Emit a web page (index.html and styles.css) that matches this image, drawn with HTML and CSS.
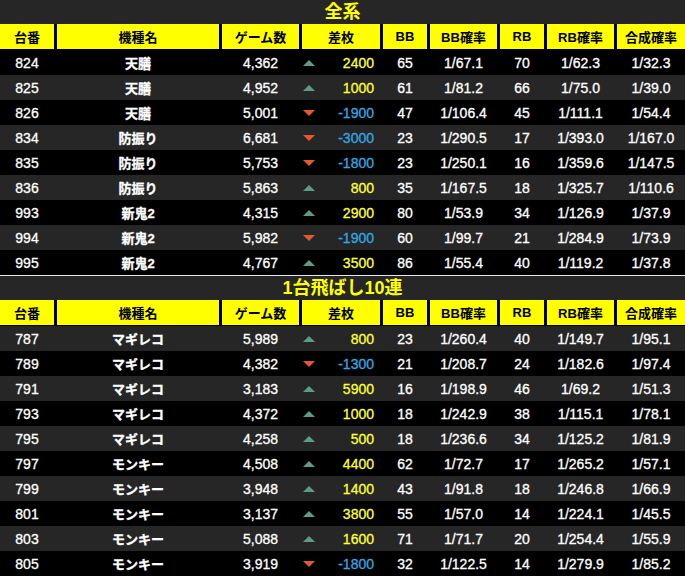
FILE: index.html
```html
<!DOCTYPE html>
<html lang="ja">
<head>
<meta charset="utf-8">
<title>データ</title>
<link rel="stylesheet" href="styles.css">
</head>
<body>
<div class="board">
  <section class="block">
    <div class="title">全系</div>
    <div class="row head"><div>台番</div><div>機種名</div><div>ゲーム数</div><div>差枚</div><div>BB</div><div>BB確率</div><div>RB</div><div>RB確率</div><div>合成確率</div></div>
    <div class="row dark"><div>824</div><div class="jp">天膳</div><div>4,362</div><div class="diff"><span class="arrow up"></span><span class="plus">2400</span></div><div>65</div><div>1/67.1</div><div>70</div><div>1/62.3</div><div>1/32.3</div></div>
    <div class="row gray"><div>825</div><div class="jp">天膳</div><div>4,952</div><div class="diff"><span class="arrow up"></span><span class="plus">1000</span></div><div>61</div><div>1/81.2</div><div>66</div><div>1/75.0</div><div>1/39.0</div></div>
    <div class="row dark"><div>826</div><div class="jp">天膳</div><div>5,001</div><div class="diff"><span class="arrow down"></span><span class="minus">-1900</span></div><div>47</div><div>1/106.4</div><div>45</div><div>1/111.1</div><div>1/54.4</div></div>
    <div class="row gray"><div>834</div><div class="jp">防振り</div><div>6,681</div><div class="diff"><span class="arrow down"></span><span class="minus">-3000</span></div><div>23</div><div>1/290.5</div><div>17</div><div>1/393.0</div><div>1/167.0</div></div>
    <div class="row dark"><div>835</div><div class="jp">防振り</div><div>5,753</div><div class="diff"><span class="arrow down"></span><span class="minus">-1800</span></div><div>23</div><div>1/250.1</div><div>16</div><div>1/359.6</div><div>1/147.5</div></div>
    <div class="row gray"><div>836</div><div class="jp">防振り</div><div>5,863</div><div class="diff"><span class="arrow up"></span><span class="plus">800</span></div><div>35</div><div>1/167.5</div><div>18</div><div>1/325.7</div><div>1/110.6</div></div>
    <div class="row dark"><div>993</div><div class="jp">新鬼2</div><div>4,315</div><div class="diff"><span class="arrow up"></span><span class="plus">2900</span></div><div>80</div><div>1/53.9</div><div>34</div><div>1/126.9</div><div>1/37.9</div></div>
    <div class="row gray"><div>994</div><div class="jp">新鬼2</div><div>5,982</div><div class="diff"><span class="arrow down"></span><span class="minus">-1900</span></div><div>60</div><div>1/99.7</div><div>21</div><div>1/284.9</div><div>1/73.9</div></div>
    <div class="row dark"><div>995</div><div class="jp">新鬼2</div><div>4,767</div><div class="diff"><span class="arrow up"></span><span class="plus">3500</span></div><div>86</div><div>1/55.4</div><div>40</div><div>1/119.2</div><div>1/37.8</div></div>
  </section>
  <section class="block second">
    <div class="title">1台飛ばし10連</div>
    <div class="row head"><div>台番</div><div>機種名</div><div>ゲーム数</div><div>差枚</div><div>BB</div><div>BB確率</div><div>RB</div><div>RB確率</div><div>合成確率</div></div>
    <div class="row gray"><div>787</div><div class="jp">マギレコ</div><div>5,989</div><div class="diff"><span class="arrow up"></span><span class="plus">800</span></div><div>23</div><div>1/260.4</div><div>40</div><div>1/149.7</div><div>1/95.1</div></div>
    <div class="row dark"><div>789</div><div class="jp">マギレコ</div><div>4,382</div><div class="diff"><span class="arrow down"></span><span class="minus">-1300</span></div><div>21</div><div>1/208.7</div><div>24</div><div>1/182.6</div><div>1/97.4</div></div>
    <div class="row gray"><div>791</div><div class="jp">マギレコ</div><div>3,183</div><div class="diff"><span class="arrow up"></span><span class="plus">5900</span></div><div>16</div><div>1/198.9</div><div>46</div><div>1/69.2</div><div>1/51.3</div></div>
    <div class="row dark"><div>793</div><div class="jp">マギレコ</div><div>4,372</div><div class="diff"><span class="arrow up"></span><span class="plus">1000</span></div><div>18</div><div>1/242.9</div><div>38</div><div>1/115.1</div><div>1/78.1</div></div>
    <div class="row gray"><div>795</div><div class="jp">マギレコ</div><div>4,258</div><div class="diff"><span class="arrow up"></span><span class="plus">500</span></div><div>18</div><div>1/236.6</div><div>34</div><div>1/125.2</div><div>1/81.9</div></div>
    <div class="row dark"><div>797</div><div class="jp">モンキー</div><div>4,508</div><div class="diff"><span class="arrow up"></span><span class="plus">4400</span></div><div>62</div><div>1/72.7</div><div>17</div><div>1/265.2</div><div>1/57.1</div></div>
    <div class="row gray"><div>799</div><div class="jp">モンキー</div><div>3,948</div><div class="diff"><span class="arrow up"></span><span class="plus">1400</span></div><div>43</div><div>1/91.8</div><div>18</div><div>1/246.8</div><div>1/66.9</div></div>
    <div class="row dark"><div>801</div><div class="jp">モンキー</div><div>3,137</div><div class="diff"><span class="arrow up"></span><span class="plus">3800</span></div><div>55</div><div>1/57.0</div><div>14</div><div>1/224.1</div><div>1/45.5</div></div>
    <div class="row gray"><div>803</div><div class="jp">モンキー</div><div>5,088</div><div class="diff"><span class="arrow up"></span><span class="plus">1600</span></div><div>71</div><div>1/71.7</div><div>20</div><div>1/254.4</div><div>1/55.9</div></div>
    <div class="row dark"><div>805</div><div class="jp">モンキー</div><div>3,919</div><div class="diff"><span class="arrow down"></span><span class="minus">-1800</span></div><div>32</div><div>1/122.5</div><div>14</div><div>1/279.9</div><div>1/85.2</div></div>
  </section>
</div>
</body>
</html>
```

FILE: styles.css
```css
html, body {
  margin: 0;
  padding: 0;
  background: #000;
}

.board {
  width: 685px;
  font-family: "Liberation Sans", "Noto Sans CJK JP", sans-serif;
  color: #fff;
}

.block.second {
  border-top: 1px solid #e6e6e6;
}

.title {
  height: 24px;
  line-height: 24px;
  background: #262626;
  color: #ffff00;
  font-weight: bold;
  font-size: 18px;
  text-align: center;
  font-family: "Liberation Sans", "Noto Sans CJK JP", sans-serif;
}

.row {
  display: grid;
  grid-template-columns: 54px 162px 77px 78px 44px 67px 44px 67px 68px;
  column-gap: 3px;
  height: 25px;
  align-items: center;
  font-size: 14px;
  text-align: center;
  -webkit-text-stroke: 0.3px currentColor;
}

.row.dark {
  background: #000;
}

.row.gray {
  background: #262626;
}

.row.head {
  height: 26px;
  padding-bottom: 1px;
  box-sizing: border-box;
  background: #000;
  align-items: stretch;
  color: #000;
  font-weight: bold;
  font-size: 13px;
  -webkit-text-stroke: 0;
}

.row.head > div {
  background: #ffff00;
  display: flex;
  align-items: center;
  justify-content: center;
}

.jp {
  font-weight: bold;
  font-size: 13px;
}

.diff {
  display: flex;
  align-items: center;
  justify-content: space-between;
  padding: 0 6px 0 1px;
}

.arrow {
  width: 0;
  height: 0;
  border-left: 6px solid transparent;
  border-right: 6px solid transparent;
}

.arrow.up {
  border-bottom: 6px solid #5a9c88;
}

.arrow.down {
  border-top: 6px solid #e4582c;
}

.plus {
  color: #ffff33;
}

.minus {
  color: #33a8e0;
}
```
